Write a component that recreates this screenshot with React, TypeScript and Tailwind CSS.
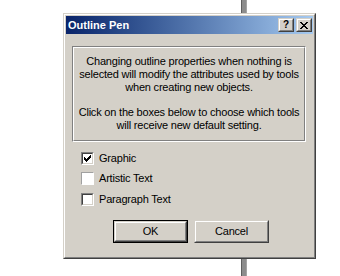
const face = 'bg-[#d4d0c8]'

function Raised({ children, className = '' }: { children?: React.ReactNode; className?: string }) {
  // classic 3D raised frame: outer light/dark, inner white/gray
  return (
    <div className={`border border-t-[#d4d0c8] border-l-[#d4d0c8] border-b-[#404040] border-r-[#404040] ${className}`}>
      <div className="flex h-full w-full items-center justify-center border border-t-white border-l-white border-b-[#808080] border-r-[#808080] bg-[#d4d0c8]">
        {children}
      </div>
    </div>
  )
}

function CaptionButton({ children }: { children: React.ReactNode }) {
  return <Raised className="h-[14px] w-[16px]">{children}</Raised>
}

function CheckBox({ checked, soft }: { checked?: boolean; soft?: boolean }) {
  if (soft) {
    return (
      <div className="h-[13px] w-[13px] shrink-0 border border-t-[#a0a0a0] border-l-[#a0a0a0] border-b-white border-r-white bg-white" />
    )
  }
  return (
    <div className="h-[13px] w-[13px] shrink-0 border border-t-[#808080] border-l-[#808080] border-b-white border-r-white">
      <div className="flex h-full w-full items-center justify-center border border-t-[#404040] border-l-[#404040] border-b-[#d4d0c8] border-r-[#d4d0c8] bg-white">
        {checked && (
          <svg width="7" height="7" viewBox="0 0 7 7" shapeRendering="crispEdges">
            <path d="M0 2h1v3h-1zM1 3h1v3h-1zM2 4h1v3h-1zM3 3h1v3h-1zM4 2h1v3h-1zM5 1h1v3h-1zM6 0h1v3h-1z" fill="#000" />
          </svg>
        )}
      </div>
    </div>
  )
}

function Option({ label, checked, soft, className = '' }: { label: string; checked?: boolean; soft?: boolean; className?: string }) {
  return (
    <div className={`flex h-[13px] items-center gap-[5px] ${className}`}>
      <CheckBox checked={checked} soft={soft} />
      <span className="leading-[13px]">{label}</span>
    </div>
  )
}

export default function App() {
  return (
    <div
      className="relative h-[276px] w-[340px] overflow-hidden bg-white pl-[63px] pt-[13px] text-[11px] tracking-[-0.2px] text-black"
      style={{ fontFamily: '"Liberation Sans", Arial, sans-serif' }}
    >
      {/* pole behind the dialog */}
      <div className="absolute left-[241px] top-0 h-full w-[6px] border-l border-r border-l-[#5e5e5e] border-r-[#a4a4a4] bg-[#8c8c8c]" aria-hidden />

      <div className="relative h-[246px] w-[253px] border border-t-[#d4d0c8] border-l-[#d4d0c8] border-b-[#404040] border-r-[#404040]">
        <div className={`h-full w-full border border-t-white border-l-white border-b-[#808080] border-r-[#808080] p-[1px] ${face}`}>
          {/* title bar */}
          <div className="flex h-[18px] items-center justify-between bg-gradient-to-r from-[#0a246a] to-[#a6caf0] pl-[2px] pr-[1px]">
            <span className="text-[11px] font-bold tracking-normal text-white">Outline Pen</span>
            <div className="flex gap-[2px]">
              <CaptionButton>
                <span className="text-[10px] font-bold leading-none tracking-normal">?</span>
              </CaptionButton>
              <CaptionButton>
                <svg width="8" height="7" viewBox="0 0 8 7" shapeRendering="crispEdges">
                  <path d="M0 0h2v1h-2zM6 0h2v1h-2zM1 1h2v1h-2zM5 1h2v1h-2zM2 2h4v1h-4zM3 3h2v1h-2zM2 4h4v1h-4zM1 5h2v1h-2zM5 5h2v1h-2zM0 6h2v1h-2zM6 6h2v1h-2z" fill="#000" />
                </svg>
              </CaptionButton>
            </div>
          </div>

          {/* info group */}
          <div className="ml-[6px] mt-[12px] h-[96px] w-[234px] border border-t-[#808080] border-l-[#808080] border-b-white border-r-white">
            <div className="h-full w-full border border-t-white border-l-white border-b-[#808080] border-r-[#808080] pt-[7px] text-center leading-[13px]">
              <p>
                Changing outline properties when nothing is
                <br />
                selected will modify the attributes used by tools
                <br />
                when creating new objects.
              </p>
              <p className="mt-[12px]">
                Click on the boxes below to choose which tools
                <br />
                will receive new default setting.
              </p>
            </div>
          </div>

          {/* options */}
          <div className="ml-[15px] mt-[10px] flex flex-col">
            <Option label="Graphic" checked />
            <Option label="Artistic Text" soft className="mt-[7px]" />
            <Option label="Paragraph Text" className="mt-[8px]" />
          </div>

          {/* buttons */}
          <div className="ml-[47px] mt-[14px] flex gap-[6px]">
            <div className="h-[23px] w-[75px] border border-black">
              <Raised className="h-full w-full">OK</Raised>
            </div>
            <Raised className="h-[23px] w-[75px]">Cancel</Raised>
          </div>
        </div>
      </div>
    </div>
  )
}
